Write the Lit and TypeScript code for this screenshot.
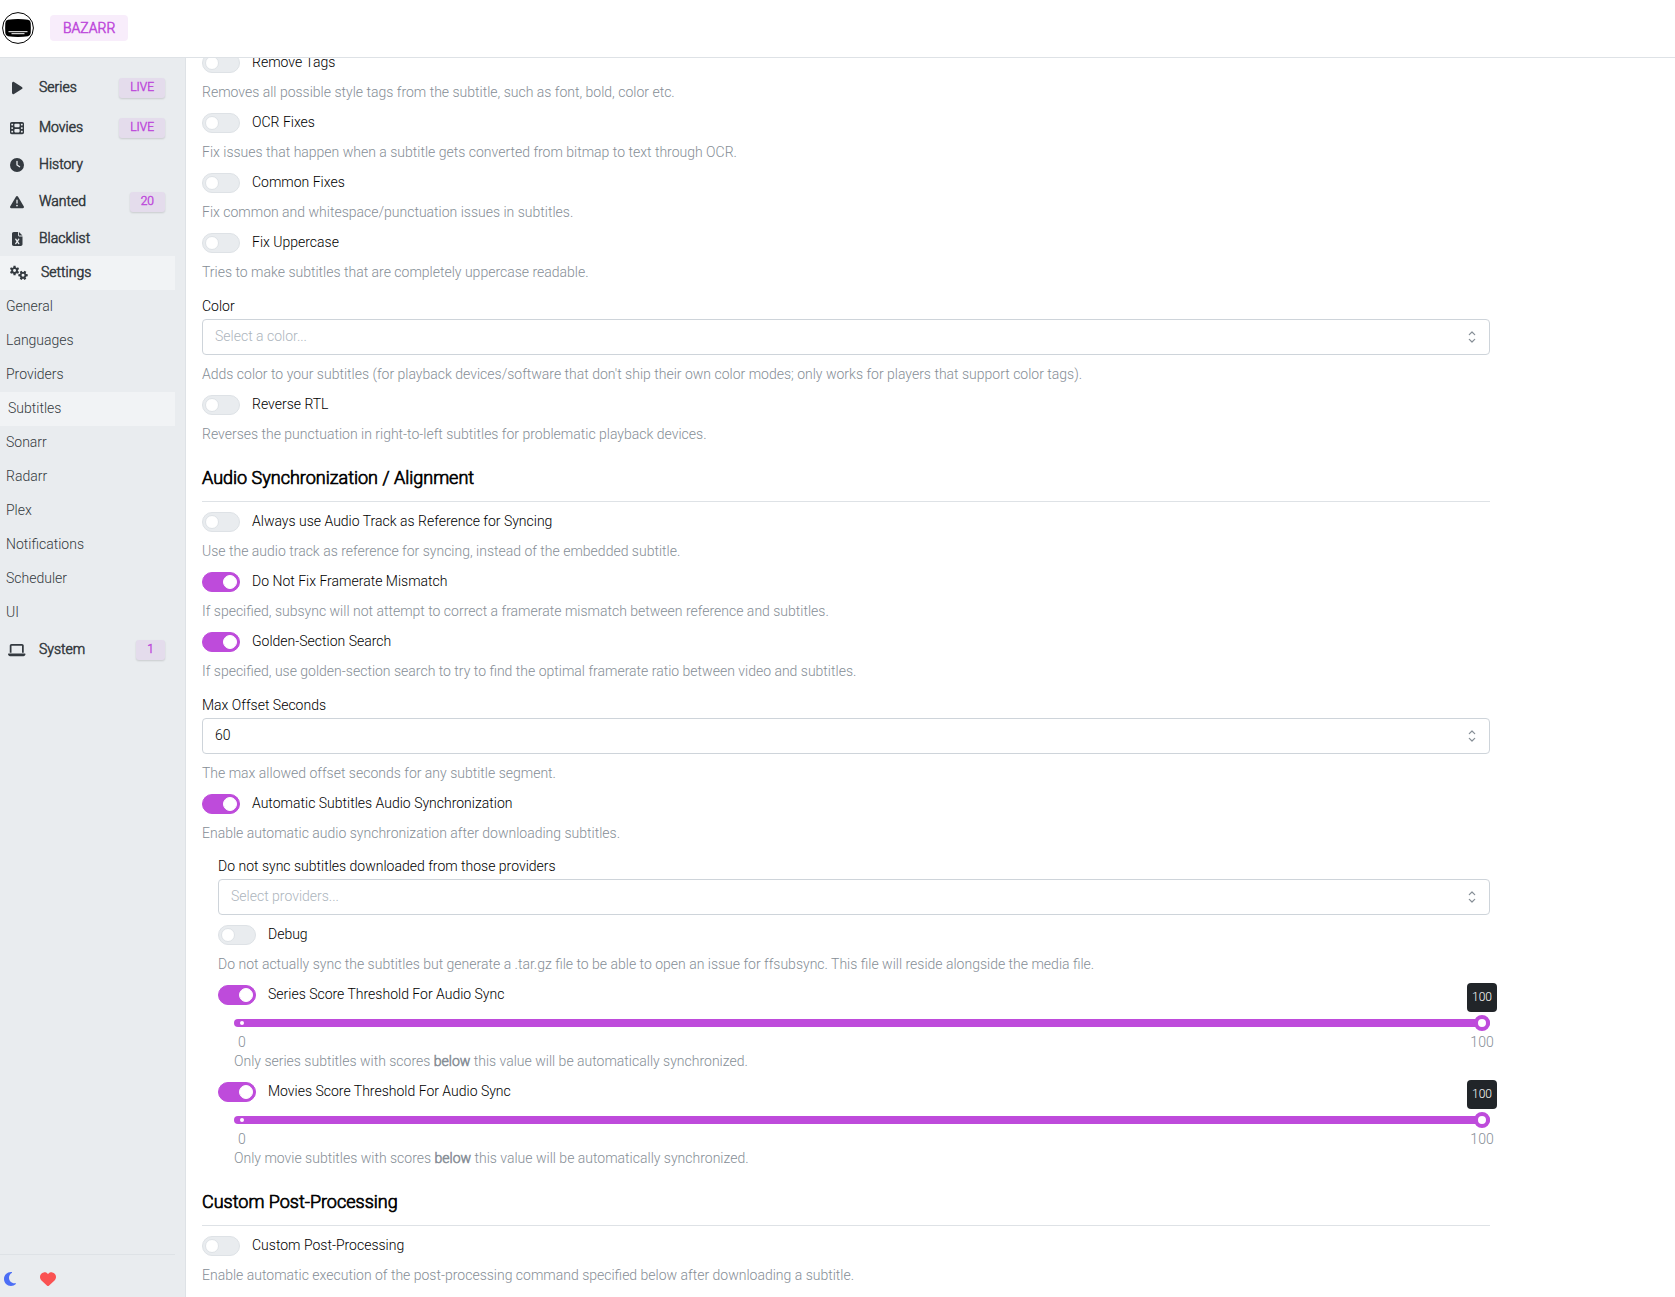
import { LitElement, html, css, svg, nothing } from "lit";
import { customElement, property } from "lit/decorators.js";
import { classMap } from "lit/directives/class-map.js";

interface Glyph {
  width: number;
  path: string;
}

/** Outline of a six-toothed gear with a round hole, for use with the even-odd rule. */
function gear(cx: number, cy: number, outer: number, inner: number, hole: number, turn: number): string {
  const points: string[] = [];
  for (let i = 0; i < 6; i++) {
    const mid = turn + (i * Math.PI) / 3;
    for (const [offset, radius] of [
      [-0.36, inner],
      [-0.22, outer],
      [0.22, outer],
      [0.36, inner],
    ]) {
      const x = cx + Math.cos(mid + offset) * radius;
      const y = cy + Math.sin(mid + offset) * radius;
      points.push(`${x.toFixed(1)} ${y.toFixed(1)}`);
    }
  }
  return `M${points.join("L")}ZM${cx - hole} ${cy}a${hole} ${hole} 0 1 0 ${hole * 2} 0a${hole} ${hole} 0 1 0 ${-hole * 2} 0Z`;
}

const GLYPHS: Record<string, Glyph> = {
  play: {
    width: 384,
    path: "M73 39c-14.8-9.1-33.4-9.4-48.5-.9S0 62.6 0 80V432c0 17.4 9.4 33.4 24.5 41.9s33.7 8.1 48.5-.9L361 297c14.3-8.7 23-24.2 23-41s-8.7-32.2-23-41L73 39z",
  },
  film: {
    width: 512,
    path: "M0 96C0 60.7 28.7 32 64 32H448c35.3 0 64 28.7 64 64V416c0 35.3-28.7 64-64 64H64c-35.3 0-64-28.7-64-64V96zM48 368v32c0 8.8 7.2 16 16 16H96c8.8 0 16-7.2 16-16V368c0-8.8-7.2-16-16-16H64c-8.8 0-16 7.2-16 16zm368-16c-8.8 0-16 7.2-16 16v32c0 8.8 7.2 16 16 16h32c8.8 0 16-7.2 16-16V368c0-8.8-7.2-16-16-16H416zM48 240v32c0 8.8 7.2 16 16 16H96c8.8 0 16-7.2 16-16V240c0-8.8-7.2-16-16-16H64c-8.8 0-16 7.2-16 16zm368-16c-8.8 0-16 7.2-16 16v32c0 8.8 7.2 16 16 16h32c8.8 0 16-7.2 16-16V240c0-8.8-7.2-16-16-16H416zM48 112v32c0 8.8 7.2 16 16 16H96c8.8 0 16-7.2 16-16V112c0-8.8-7.2-16-16-16H64c-8.8 0-16 7.2-16 16zM416 96c-8.8 0-16 7.2-16 16v32c0 8.8 7.2 16 16 16h32c8.8 0 16-7.2 16-16V112c0-8.8-7.2-16-16-16H416zM160 128v64c0 17.7 14.3 32 32 32H320c17.7 0 32-14.3 32-32V128c0-17.7-14.3-32-32-32H192c-17.7 0-32 14.3-32 32zm32 160c-17.7 0-32 14.3-32 32v64c0 17.7 14.3 32 32 32H320c17.7 0 32-14.3 32-32V320c0-17.7-14.3-32-32-32H192z",
  },
  clock: {
    width: 512,
    path: "M256 0a256 256 0 1 1 0 512A256 256 0 1 1 256 0zM232 120V256c0 8 4 15.5 10.7 20l96 64c11 7.4 25.9 4.4 33.3-6.7s4.4-25.9-6.7-33.3L280 243.2V120c0-13.3-10.7-24-24-24s-24 10.7-24 24z",
  },
  warning: {
    width: 512,
    path: "M256 32c14.2 0 27.3 7.5 34.5 19.8l216 368c7.3 12.4 7.3 27.7 .2 40.1S486.3 480 472 480H40c-14.3 0-27.6-7.7-34.7-20.1s-7-27.8 .2-40.1l216-368C228.7 39.5 241.8 32 256 32zm0 128c-13.3 0-24 10.7-24 24V296c0 13.3 10.7 24 24 24s24-10.7 24-24V184c0-13.3-10.7-24-24-24zm32 224a32 32 0 1 0 -64 0 32 32 0 1 0 64 0z",
  },
  file: {
    width: 384,
    path: "M64 0C28.7 0 0 28.7 0 64V448c0 35.3 28.7 64 64 64H320c35.3 0 64-28.7 64-64V160H256c-17.7 0-32-14.3-32-32V0H64zM256 0V128H384L256 0zM155.7 250.2L192 302.1l36.3-51.9c7.6-10.9 22.6-13.5 33.4-5.9s13.5 22.6 5.9 33.4L221.3 344l46.4 66.2c7.6 10.9 5 25.8-5.9 33.4s-25.8 5-33.4-5.9L192 385.8l-36.3 51.9c-7.6 10.9-22.6 13.5-33.4 5.9s-13.5-22.6-5.9-33.4L162.7 344l-46.4-66.2c-7.6-10.9-5-25.8 5.9-33.4s25.8-5 33.4 5.9z",
  },
  gears: {
    width: 640,
    path: gear(166, 166, 176, 124, 54, Math.PI / 6) + gear(476, 340, 176, 124, 54, 0),
  },
  laptop: {
    width: 640,
    path: "M128 32C92.7 32 64 60.7 64 96V352h64V96H512V352h64V96c0-35.3-28.7-64-64-64H128zM19.2 384C8.6 384 0 392.6 0 403.2C0 445.6 34.4 480 76.8 480H563.2c42.4 0 76.8-34.4 76.8-76.8c0-10.6-8.6-19.2-19.2-19.2H19.2z",
  },
  moon: {
    width: 384,
    path: "M223.5 32C100 32 0 132.3 0 256S100 480 223.5 480c60.6 0 115.5-24.2 155.8-63.4c5-4.9 6.3-12.5 3.1-18.7s-10.1-9.7-17-8.5c-9.8 1.7-19.8 2.6-30.1 2.6c-96.9 0-175.5-78.8-175.5-176c0-65.8 36-123.1 89.3-153.3c6.1-3.5 9.2-10.5 7.7-17.3s-7.3-11.9-14.3-12.5c-6.3-.5-12.6-.8-19-.8z",
  },
  heart: {
    width: 512,
    path: "M47.6 300.4L228.3 469.1c7.5 7 17.4 10.9 27.7 10.9s20.2-3.9 27.7-10.9L464.4 300.4c30.4-28.3 47.6-68 47.6-109.5v-5.8c0-69.9-50.5-129.5-119.4-141C347 36.5 300.6 51.4 268 84L256 96 244 84c-32.6-32.6-79-47.5-124.6-39.9C50.5 55.6 0 115.2 0 185.1v5.8c0 41.5 17.2 81.2 47.6 109.5z",
  },
};

@customElement("app-icon")
class AppIcon extends LitElement {
  @property() name = "play";

  static styles = css`
    :host {
      display: inline-flex;
    }
    .glyph {
      display: block;
      height: 1em;
      fill: currentColor;
      fill-rule: evenodd;
      overflow: visible;
    }
  `;

  render() {
    const glyph = GLYPHS[this.name];
    return html`<svg class="glyph" viewBox="0 0 ${glyph.width} 512" aria-hidden="true">
      ${svg`<path d=${glyph.path}></path>`}
    </svg>`;
  }
}

@customElement("setting-switch")
class SettingSwitch extends LitElement {
  @property() label = "";
  @property() description = "";
  @property({ type: Boolean }) on = false;

  static styles = css`
    :host {
      display: flex;
      flex-direction: column;
      gap: 8px;
    }
    .row {
      display: flex;
      align-items: flex-end;
      gap: 12px;
    }
    .toggle {
      appearance: none;
      display: flex;
      align-items: center;
      box-sizing: border-box;
      width: 38px;
      height: 20px;
      margin: 0;
      padding: 0 2px;
      border: 1px solid #dee2e6;
      border-radius: 10px;
      background: #e9ecef;
      cursor: pointer;
    }
    .toggle::before {
      content: "";
      box-sizing: border-box;
      width: 14px;
      height: 14px;
      border: 1px solid #dee2e6;
      border-radius: 50%;
      background: #fff;
    }
    .toggle:checked {
      justify-content: flex-end;
      border-color: #be4bdb;
      background: #be4bdb;
    }
    .toggle:checked::before {
      border-color: #fff;
    }
    .label {
      color: #000;
      line-height: 22px;
      cursor: pointer;
    }
    .description {
      margin: 0;
      color: #868e96;
      line-height: 22px;
    }
  `;

  render() {
    return html`
      <div class="row">
        <input class="toggle" id="toggle" type="checkbox" role="switch" .checked=${this.on} />
        <label class="label" for="toggle">${this.label}</label>
      </div>
      ${this.description ? html`<p class="description">${this.description}</p>` : nothing}
    `;
  }
}

@customElement("setting-select")
class SettingSelect extends LitElement {
  @property() label = "";
  @property() description = "";
  @property() value = "";
  @property() placeholder = "";

  static styles = css`
    :host {
      display: flex;
      flex-direction: column;
      gap: 8px;
    }
    .field {
      display: flex;
      flex-direction: column;
      gap: 2px;
    }
    .label {
      align-self: flex-start;
      color: #000;
      line-height: 22px;
    }
    .box {
      display: grid;
      align-items: center;
    }
    .select {
      grid-area: 1 / 1;
      appearance: none;
      box-sizing: border-box;
      width: 100%;
      height: 36px;
      margin: 0;
      padding: 0 34px 2px 12px;
      border: 1px solid #ced4da;
      border-radius: 4px;
      background: #fff;
      color: #000;
      font: inherit;
    }
    .placeholder {
      color: #adb5bd;
    }
    .chevrons {
      grid-area: 1 / 1;
      justify-self: end;
      width: 16px;
      height: 16px;
      margin-right: 10px;
      fill: none;
      stroke: #868e96;
      stroke-width: 1.2;
      stroke-linecap: round;
      stroke-linejoin: round;
      pointer-events: none;
    }
    .description {
      margin: 0;
      color: #868e96;
      line-height: 22px;
    }
  `;

  render() {
    return html`
      <div class="field">
        <label class="label" for="select">${this.label}</label>
        <div class="box">
          <select id="select" class=${classMap({ select: true, placeholder: !this.value })}>
            <option>${this.value || this.placeholder}</option>
          </select>
          <svg class="chevrons" viewBox="0 0 16 16" aria-hidden="true">
            <path d="M5.3 5.6L8 3L10.7 5.600M5.3 10.4L8 13L10.7 10.4"></path>
          </svg>
        </div>
      </div>
      ${this.description ? html`<p class="description">${this.description}</p>` : nothing}
    `;
  }
}

@customElement("score-slider")
class ScoreSlider extends LitElement {
  @property() label = "";
  @property() kind = "";
  @property({ type: Number }) value = 100;

  static styles = css`
    :host {
      display: block;
      color: #868e96;
    }
    .rail {
      position: relative;
      display: flex;
    }
    .range {
      appearance: none;
      flex: 1;
      width: 100%;
      height: 16px;
      margin: 0;
      background: transparent;
    }
    .range::-webkit-slider-runnable-track {
      height: 8px;
      border-radius: 4px;
      background: #be4bdb;
    }
    .range::-webkit-slider-thumb {
      appearance: none;
      box-sizing: border-box;
      width: 16px;
      height: 16px;
      margin-top: -4px;
      border: 4px solid #be4bdb;
      border-radius: 50%;
      background: #fff;
    }
    .dot {
      position: absolute;
      top: 6px;
      left: 6px;
      width: 4px;
      height: 4px;
      border-radius: 50%;
      background: #fff;
      pointer-events: none;
    }
    .bubble {
      position: absolute;
      right: -7px;
      bottom: 19px;
      box-sizing: border-box;
      width: 30px;
      padding: 5px 0 6px;
      border-radius: 4px;
      background: #212529;
      color: #fff;
      font-size: 12px;
      line-height: 18px;
      text-align: center;
    }
    .marks {
      display: flex;
      justify-content: space-between;
      padding-top: 3px;
      line-height: 16px;
    }
    .mark {
      display: flex;
      justify-content: center;
      width: 16px;
    }
    .description {
      margin: 0;
      line-height: 22px;
    }
    .strong {
      font-weight: 300;
      -webkit-text-stroke: 0.04em;
    }
  `;

  render() {
    return html`
      <div class="rail">
        <input class="range" type="range" min="0" max="100" aria-label=${this.label} .value=${String(this.value)} />
        <span class="dot"></span>
        <output class="bubble">${this.value}</output>
      </div>
      <div class="marks"><span class="mark">0</span><span class="mark">100</span></div>
      <p class="description">
        Only ${this.kind} subtitles with scores <b class="strong">below</b> this value will be automatically
        synchronized.
      </p>
    `;
  }
}

interface NavItem {
  icon: string;
  label: string;
  badge?: string;
  active?: boolean;
  children?: string[];
}

const NAV: NavItem[] = [
  { icon: "play", label: "Series", badge: "LIVE" },
  { icon: "film", label: "Movies", badge: "LIVE" },
  { icon: "clock", label: "History" },
  { icon: "warning", label: "Wanted", badge: "20" },
  { icon: "file", label: "Blacklist" },
  {
    icon: "gears",
    label: "Settings",
    active: true,
    children: [
      "General",
      "Languages",
      "Providers",
      "Subtitles",
      "Sonarr",
      "Radarr",
      "Plex",
      "Notifications",
      "Scheduler",
      "UI",
    ],
  },
  { icon: "laptop", label: "System", badge: "1" },
];

const CURRENT_PAGE = "Subtitles";

@customElement("app-root")
class AppRoot extends LitElement {
  static styles = css`
    :host {
      display: grid;
      grid-template: auto 1fr / 186px 1fr;
      min-height: 100vh;
      background: #fff;
      color: #000;
      font: 300 14px/22px Roboto, "Liberation Sans", sans-serif;
    }
    .header {
      grid-column: 1 / -1;
      display: flex;
      align-items: center;
      gap: 16px;
      box-sizing: border-box;
      height: 58px;
      padding: 0 2px 2px;
      border-bottom: 1px solid #dee2e6;
    }
    .home {
      display: flex;
    }
    .logo {
      width: 32px;
      height: 32px;
    }
    .brand {
      padding: 0 13px;
      border-radius: 4px;
      background: rgba(190, 75, 219, 0.1);
      color: #be4bdb;
      line-height: 26px;
      -webkit-text-stroke: 0.04em;
    }
    .sidebar {
      display: flex;
      flex-direction: column;
      justify-content: space-between;
      box-sizing: border-box;
      padding: 10px 10px 0 0;
      border-right: 1px solid #dee2e6;
      background: #e9ecef;
    }
    .nav {
      display: flex;
      flex-direction: column;
    }
    .item {
      display: flex;
      align-items: center;
      gap: 11px;
      box-sizing: border-box;
      height: 34px;
      margin-bottom: 3px;
      padding: 0 10px 0 6px;
      color: #343a40;
      text-decoration: none;
    }
    .live {
      height: 40px;
      margin-bottom: 0;
    }
    .last {
      margin-bottom: 0;
    }
    .sub {
      margin-bottom: 0;
    }
    .active {
      padding-left: 8px;
      background: #f1f3f5;
    }
    .children {
      display: flex;
      flex-direction: column;
      margin-bottom: 3px;
    }
    .text {
      padding-bottom: 2px;
    }
    .strong {
      -webkit-text-stroke: 0.04em;
    }
    .icon {
      justify-content: center;
      width: 22px;
    }
    .badge {
      margin-left: auto;
      padding: 0 11px 2px;
      border-radius: 3px;
      background: rgba(190, 75, 219, 0.1);
      box-shadow: 0 1px 2px rgba(0, 0, 0, 0.14);
      color: #be4bdb;
      font-size: 12px;
      line-height: 18px;
      -webkit-text-stroke: 0.04em;
    }
    .footer {
      display: flex;
      gap: 22px;
      padding: 16px 4px 11px;
      border-top: 1px solid #dee2e6;
    }
    .action {
      display: flex;
      padding: 0;
      border: 0;
      background: none;
      font-size: 16px;
      cursor: pointer;
    }
    .theme {
      width: 14px;
      color: #4c6ef5;
    }
    .donate {
      color: #fa5252;
    }
    .main {
      min-width: 0;
      overflow: hidden;
    }
    .settings {
      display: flex;
      flex-direction: column;
      gap: 8px;
      box-sizing: border-box;
      max-width: 1320px;
      margin-top: -7px;
      padding: 0 16px 12px;
    }
    .spaced {
      margin-top: 4px;
    }
    .title {
      margin: 11px 0 0;
      padding-bottom: 9px;
      border-bottom: 1px solid #dee2e6;
      font-size: 18px;
      font-weight: 300;
      line-height: 28px;
      -webkit-text-stroke: 0.04em;
    }
    .nested {
      display: flex;
      flex-direction: column;
      gap: 8px;
      padding: 3px 0 0 16px;
    }
    .threshold {
      display: flex;
      flex-direction: column;
      gap: 10px;
    }
    .score {
      margin-left: 16px;
    }
  `;

  private renderItem(item: NavItem) {
    const classes = {
      item: true,
      live: item.badge === "LIVE",
      active: !!item.active,
      last: item.label === "Blacklist" || !!item.children,
    };
    return html`
      <a href="#${item.label.toLowerCase()}" class=${classMap(classes)}>
        <app-icon class="icon" name=${item.icon}></app-icon>
        <span class="text strong">${item.label}</span>
        ${item.badge ? html`<span class="badge">${item.badge}</span>` : nothing}
      </a>
      ${item.children
        ? html`<div class="children">
            ${item.children.map(
              (child) => html`<a
                href="#${child.toLowerCase()}"
                class=${classMap({ item: true, sub: true, active: child === CURRENT_PAGE })}
                ><span class="text">${child}</span></a
              >`
            )}
          </div>`
        : nothing}
    `;
  }

  private renderThreshold(label: string, kind: string) {
    return html`<div class="threshold">
      <setting-switch on label=${label}></setting-switch>
      <score-slider class="score" label=${label} kind=${kind}></score-slider>
    </div>`;
  }

  render() {
    return html`
      <header class="header">
        <a class="home" href="#home" aria-label="Home">
          <svg class="logo" viewBox="0 0 32 32" aria-hidden="true">
            <circle cx="16" cy="16" r="15.4" fill="#fff" stroke="#000" stroke-width="1"></circle>
            <path
              d="M6 7.8Q16 6.2 26 7.8Q28.6 8.2 28.7 11Q29 16 28.7 21Q28.5 23.8 26 24.2Q16 25.6 6 24.2Q3.5 23.8 3.3 21Q3 16 3.3 11Q3.4 8.2 6 7.8Z"
            ></path>
            <path d="M6.5 19.7H25.5M9.5 21.7H22.5" fill="none" stroke="#fff" stroke-width="1"></path>
          </svg>
        </a>
        <span class="brand">BAZARR</span>
      </header>
      <aside class="sidebar">
        <nav class="nav">${NAV.map((item) => this.renderItem(item))}</nav>
        <div class="footer">
          <button class="action theme" aria-label="Toggle theme"><app-icon name="moon"></app-icon></button>
          <button class="action donate" aria-label="Donate"><app-icon name="heart"></app-icon></button>
        </div>
      </aside>
      <main class="main">
        <div class="settings">
          <setting-switch
            label="Remove Tags"
            description="Removes all possible style tags from the subtitle, such as font, bold, color etc."
          ></setting-switch>
          <setting-switch
            label="OCR Fixes"
            description="Fix issues that happen when a subtitle gets converted from bitmap to text through OCR."
          ></setting-switch>
          <setting-switch
            label="Common Fixes"
            description="Fix common and whitespace/punctuation issues in subtitles."
          ></setting-switch>
          <setting-switch
            label="Fix Uppercase"
            description="Tries to make subtitles that are completely uppercase readable."
          ></setting-switch>
          <setting-select
            class="spaced"
            label="Color"
            placeholder="Select a color..."
            description="Adds color to your subtitles (for playback devices/software that don't ship their own color modes; only works for players that support color tags)."
          ></setting-select>
          <setting-switch
            label="Reverse RTL"
            description="Reverses the punctuation in right-to-left subtitles for problematic playback devices."
          ></setting-switch>

          <h2 class="title">Audio Synchronization / Alignment</h2>
          <setting-switch
            label="Always use Audio Track as Reference for Syncing"
            description="Use the audio track as reference for syncing, instead of the embedded subtitle."
          ></setting-switch>
          <setting-switch
            on
            label="Do Not Fix Framerate Mismatch"
            description="If specified, subsync will not attempt to correct a framerate mismatch between reference and subtitles."
          ></setting-switch>
          <setting-switch
            on
            label="Golden-Section Search"
            description="If specified, use golden-section search to try to find the optimal framerate ratio between video and subtitles."
          ></setting-switch>
          <setting-select
            class="spaced"
            label="Max Offset Seconds"
            value="60"
            description="The max allowed offset seconds for any subtitle segment."
          ></setting-select>
          <setting-switch
            on
            label="Automatic Subtitles Audio Synchronization"
            description="Enable automatic audio synchronization after downloading subtitles."
          ></setting-switch>
          <div class="nested">
            <setting-select
              label="Do not sync subtitles downloaded from those providers"
              placeholder="Select providers..."
            ></setting-select>
            <setting-switch
              label="Debug"
              description="Do not actually sync the subtitles but generate a .tar.gz file to be able to open an issue for ffsubsync. This file will reside alongside the media file."
            ></setting-switch>
            ${this.renderThreshold("Series Score Threshold For Audio Sync", "series")}
            ${this.renderThreshold("Movies Score Threshold For Audio Sync", "movie")}
          </div>

          <h2 class="title">Custom Post-Processing</h2>
          <setting-switch
            label="Custom Post-Processing"
            description="Enable automatic execution of the post-processing command specified below after downloading a subtitle."
          ></setting-switch>
        </div>
      </main>
    `;
  }
}
